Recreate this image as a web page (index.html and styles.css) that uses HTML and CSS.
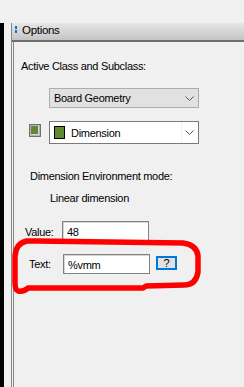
FILE: index.html
```html
<!DOCTYPE html>
<html>
<head>
<meta charset="utf-8">
<link rel="stylesheet" href="styles.css">
</head>
<body>
<div class="app">
  <div class="blackbar"></div>
  <div class="gap"></div>
  <div class="pane">
    <div class="titlebar">
      <span class="grip"><i></i><i></i></span>
      <span class="title">Options</span>
    </div>
    <div class="content">
      <div class="label l-active">Active Class and Subclass:</div>
      <div class="select sel-class">
        <span class="seltext">Board Geometry</span>
        <svg class="chev" width="9" height="5" viewBox="0 0 9 5"><polyline points="0.5,0.5 4.5,4.5 8.5,0.5" fill="none" stroke="#555" stroke-width="1"/></svg>
      </div>
      <div class="row-sub">
        <span class="colorbtn"></span>
        <div class="select sel-sub">
          <span class="sw"></span>
          <span class="seltext">Dimension</span>
          <span class="chevbox"><svg class="chev" width="9" height="5" viewBox="0 0 9 5"><polyline points="0.5,0.5 4.5,4.5 8.5,0.5" fill="none" stroke="#555" stroke-width="1"/></svg></span>
        </div>
      </div>
      <div class="label l-env">Dimension Environment mode:</div>
      <div class="label l-linear">Linear dimension</div>
      <div class="field f-value">
        <span class="flabel">Value:</span>
        <span class="input">48</span>
      </div>
      <div class="field f-text">
        <span class="flabel">Text:</span>
        <span class="input">%vmm</span>
        <span class="help">?</span>
      </div>
    </div>
  </div>
</div>
<svg class="annot" width="244" height="387" viewBox="0 0 244 387">
  <path d="M 36 241 L 183 243 Q 197 245 198 256 L 198 272 Q 196 285 184 285 L 146 286 L 143 288 L 28 288 Q 24 292 18 291 Q 15 290 15 282 L 15 256 Q 16 243 27 241 Z" fill="none" stroke="#ff0000" stroke-width="5.5" stroke-linejoin="round" stroke-linecap="round"/>
</svg>
</body>
</html>
```
FILE: styles.css
```css
html, body {
  margin: 0;
  padding: 0;
}
body {
  width: 244px;
  height: 387px;
  overflow: hidden;
  position: relative;
  background: #f0f0f0;
  font-family: "Liberation Sans", Arial, sans-serif;
  font-size: 11px;
  color: #000;
  letter-spacing: -0.3px;
}
.app {
  display: flex;
  padding-top: 23px;
  height: 387px;
  box-sizing: border-box;
}
.blackbar {
  width: 4px;
  background: #000;
}
.gap {
  width: 7px;
}
.pane {
  flex: 1;
  display: flex;
  flex-direction: column;
  border-left: 1px solid #878787;
}
.titlebar {
  height: 17px;
  display: flex;
  align-items: flex-start;
  background: linear-gradient(#e6e6e6, #c4c4c4);
  border-bottom: 2px solid #6f6f6f;
}
.grip {
  display: flex;
  flex-direction: column;
  gap: 1px;
  margin: 3px 0 0 3px;
}
.grip i {
  display: block;
  width: 2px;
  height: 3px;
  background: #1a6fd6;
}
.title {
  margin: 1px 0 0 5px;
  line-height: 13px;
  font-size: 11.5px;
}
.content {
  flex: 1;
  margin-left: 1px;
  border-left: 1px solid #878787;
  display: flex;
  flex-direction: column;
  align-items: flex-start;
}
.label {
  line-height: 14px;
  white-space: nowrap;
}
.l-active {
  margin: 17px 0 0 7px;
}
.select {
  box-sizing: border-box;
  width: 150px;
  display: flex;
  align-items: center;
  line-height: 14px;
}
.sel-class {
  margin: 15px 0 0 35px;
  height: 20px;
  background: #e1e1e1;
  border: 1px solid #adadad;
  padding-left: 4px;
}
.sel-class .chev {
  margin-left: auto;
  margin-right: 4px;
}
.row-sub {
  display: flex;
  align-items: flex-start;
  margin: 13px 0 0 15px;
}
.colorbtn {
  box-sizing: border-box;
  width: 12px;
  height: 13px;
  margin-top: 3px;
  margin-right: 8px;
  border: 1px solid #707070;
  box-shadow: inset 0 0 0 1px #b4b4b4, inset -1px -1px 0 1px #d8d8d8;
  background: #5f8a33;
}
.sel-sub {
  height: 23px;
  background: #fff;
  border: 1px solid #7a7a7a;
  padding-left: 4px;
}
.sw {
  box-sizing: border-box;
  width: 11px;
  height: 13px;
  border: 1px solid #000;
  background: #5f8a33;
  margin-right: 6px;
}
.chevbox {
  margin-left: auto;
  align-self: stretch;
  display: flex;
  align-items: center;
  padding: 0 4px 0 3px;
  border-left: 1px solid #f2f2f2;
}
.l-env {
  margin: 25px 0 0 16px;
}
.l-linear {
  margin: 8px 0 0 36px;
}
.field {
  display: flex;
  align-items: flex-start;
  line-height: 14px;
}
.flabel {
  white-space: nowrap;
}
.input {
  box-sizing: border-box;
  width: 87px;
  height: 20px;
  background: #fff;
  border: 1px solid #828282;
  box-shadow: inset 1px 1px 0 #d6d6d6;
  padding: 3px 0 0 4px;
}
.f-value {
  margin: 16px 0 0 11px;
}
.f-value .flabel {
  width: 37px;
  margin-top: 4px;
}
.f-text {
  margin: 13px 0 0 15px;
}
.f-text .flabel {
  width: 34px;
  margin-top: 3px;
}
.help {
  box-sizing: border-box;
  width: 21px;
  height: 14px;
  margin: 2px 0 0 6px;
  border: 2px solid #0078d7;
  background: #e1e1e1;
  display: flex;
  align-items: center;
  justify-content: center;
  line-height: 10px;
  font-size: 11px;
}
.annot {
  position: absolute;
  left: 0;
  top: 0;
  pointer-events: none;
}
```
